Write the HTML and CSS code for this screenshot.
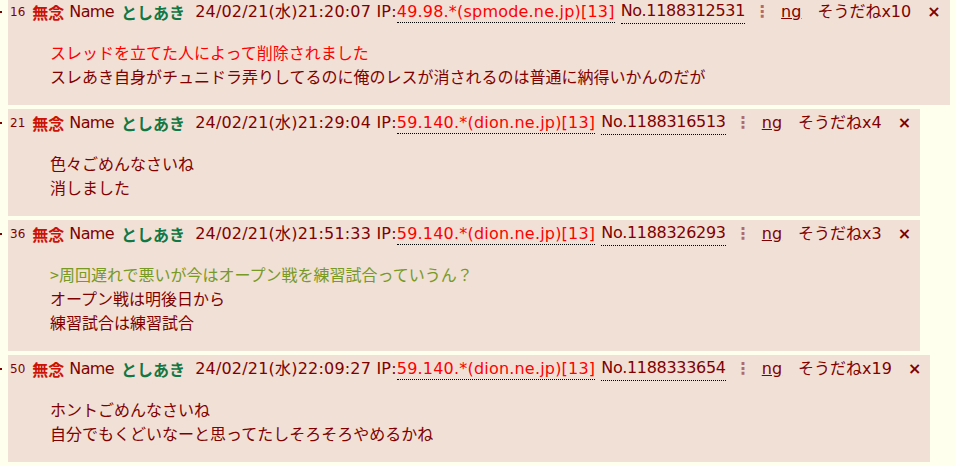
FILE: index.html
```html
<!DOCTYPE html>
<html lang="ja">
<head>
<meta charset="utf-8">
<link rel="stylesheet" href="styles.css">
</head>
<body>
<div class="thread">
  <div class="post">
    <div class="rts"><span class="dot"></span></div>
    <div class="rtd">
      <div class="hd"><span class="rsc">16</span><span class="csb">無念</span><span class="nm">Name</span><span class="cnm">としあき</span><span class="cnw">24/02/21(水)21:20:07 IP:<span class="ip">49.98.*(spmode.ne.jp)[13]</span></span><span class="cno">No.1188312531</span><span class="menu">⋮</span><span class="ng">ng</span><span class="sod">そうだねx10</span><span class="del">×</span></div>
      <blockquote class="msg"><span class="deleted">スレッドを立てた人によって削除されました</span><br>スレあき自身がチュニドラ弄りしてるのに俺のレスが消されるのは普通に納得いかんのだが</blockquote>
    </div>
  </div>
  <div class="post">
    <div class="rts"><span class="dot"></span></div>
    <div class="rtd">
      <div class="hd"><span class="rsc">21</span><span class="csb">無念</span><span class="nm">Name</span><span class="cnm">としあき</span><span class="cnw">24/02/21(水)21:29:04 IP:<span class="ip">59.140.*(dion.ne.jp)[13]</span></span><span class="cno">No.1188316513</span><span class="menu">⋮</span><span class="ng">ng</span><span class="sod">そうだねx4</span><span class="del">×</span></div>
      <blockquote class="msg">色々ごめんなさいね<br>消しました</blockquote>
    </div>
  </div>
  <div class="post">
    <div class="rts"><span class="dot"></span></div>
    <div class="rtd">
      <div class="hd"><span class="rsc">36</span><span class="csb">無念</span><span class="nm">Name</span><span class="cnm">としあき</span><span class="cnw">24/02/21(水)21:51:33 IP:<span class="ip">59.140.*(dion.ne.jp)[13]</span></span><span class="cno">No.1188326293</span><span class="menu">⋮</span><span class="ng">ng</span><span class="sod">そうだねx3</span><span class="del">×</span></div>
      <blockquote class="msg"><span class="quote">&gt;周回遅れで悪いが今はオープン戦を練習試合っていうん？</span><br>オープン戦は明後日から<br>練習試合は練習試合</blockquote>
    </div>
  </div>
  <div class="post">
    <div class="rts"><span class="dot"></span></div>
    <div class="rtd">
      <div class="hd"><span class="rsc">50</span><span class="csb">無念</span><span class="nm">Name</span><span class="cnm">としあき</span><span class="cnw">24/02/21(水)22:09:27 IP:<span class="ip">59.140.*(dion.ne.jp)[13]</span></span><span class="cno">No.1188333654</span><span class="menu">⋮</span><span class="ng">ng</span><span class="sod">そうだねx19</span><span class="del">×</span></div>
      <blockquote class="msg">ホントごめんなさいね<br>自分でもくどいなーと思ってたしそろそろやめるかね</blockquote>
    </div>
  </div>
</div>
</body>
</html>
```
FILE: styles.css
```css
html, body {
  margin: 0;
  padding: 0;
}
body {
  background: #ffffee;
  color: #800000;
  font-family: "DejaVu Sans", "Noto Sans CJK JP", sans-serif;
  font-size: 16px;
}
.thread {
  display: flex;
  flex-direction: column;
  align-items: flex-start;
  gap: 4px;
  margin-top: -2px;
}
.post {
  display: flex;
  align-items: flex-start;
}
.rts {
  width: 8px;
  height: 28px;
  display: flex;
  align-items: center;
}
.dot {
  width: 2px;
  height: 2px;
  background: #800000;
}
.rtd {
  background: #f0e0d6;
  padding: 0 9px 1px 2px;
}
.hd {
  height: 28px;
  display: flex;
  align-items: center;
  white-space: nowrap;
  line-height: 22px;
}
.rsc {
  font-size: 12px;
  margin-right: 7px;
}
.csb {
  color: #cc1105;
  font-weight: bold;
  margin-right: 5px;
  font-family: "Noto Sans CJK JP", sans-serif;
}
.nm {
  letter-spacing: -0.6px;
}
.cnm {
  color: #117743;
  font-weight: bold;
  margin-left: 7px;
  margin-right: 10px;
  font-family: "Noto Sans CJK JP", sans-serif;
}
.cnw {
  letter-spacing: 0.2px;
}
.ip {
  color: #ff0000;
  border-bottom: 1px dotted #000;
  padding-bottom: 1px;
}
.cno {
  margin-left: 6px;
  letter-spacing: -0.3px;
  border-bottom: 1px dotted #000;
  padding-bottom: 1px;
}
.menu {
  color: #b06a6a;
  margin-left: 9px;
  font-weight: bold;
}
.ng {
  margin-left: 11px;
  text-decoration: underline;
}
.sod {
  margin-left: 16px;
}
.del {
  margin-left: 16px;
  font-weight: bold;
}
.msg {
  margin: 14px 0 16px 40px;
  line-height: 24px;
  font-family: "Noto Sans CJK JP", sans-serif;
}
.deleted {
  color: #ff0000;
}
.quote {
  color: #789922;
}
```
